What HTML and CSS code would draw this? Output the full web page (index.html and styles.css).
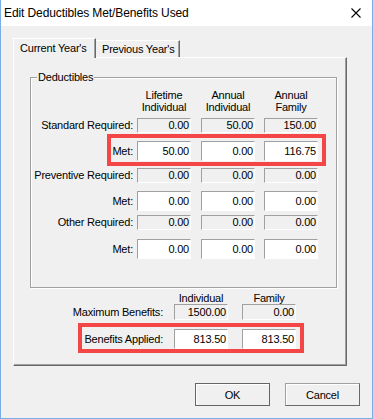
FILE: index.html
```html
<!DOCTYPE html>
<html>
<head>
<meta charset="utf-8">
<link rel="stylesheet" href="styles.css">
</head>
<body>
<div class="window">
  <div class="titlebar">
    <span class="title">Edit Deductibles Met/Benefits Used</span>
    <svg class="close" width="10" height="10" viewBox="0 0 10 10"><path d="M0.5 0.5 L9.5 9.5 M9.5 0.5 L0.5 9.5" stroke="#000" stroke-width="1.1" fill="none"/></svg>
  </div>
  <div class="client">
    <div class="tabs">
      <div class="tab active">Current Year's</div>
      <div class="tab inactive">Previous Year's</div>
    </div>
    <div class="panel">
      <div class="group">
        <span class="group-label">Deductibles</span>
        <div class="grid">
          <div></div>
          <div class="hd">Lifetime<br>Individual</div>
          <div class="hd">Annual<br>Individual</div>
          <div class="hd">Annual<br>Family</div>

          <div class="lab">Standard Required:</div>
          <div class="ro">0.00</div>
          <div class="ro">50.00</div>
          <div class="ro">150.00</div>

          <div class="lab tall">Met:</div>
          <div class="ed">50.00</div>
          <div class="ed">0.00</div>
          <div class="ed">116.75</div>

          <div class="lab">Preventive Required:</div>
          <div class="ro">0.00</div>
          <div class="ro">0.00</div>
          <div class="ro">0.00</div>

          <div class="lab tall">Met:</div>
          <div class="ed">0.00</div>
          <div class="ed">0.00</div>
          <div class="ed">0.00</div>

          <div class="lab">Other Required:</div>
          <div class="ro">0.00</div>
          <div class="ro">0.00</div>
          <div class="ro">0.00</div>

          <div class="lab tall">Met:</div>
          <div class="ed">0.00</div>
          <div class="ed">0.00</div>
          <div class="ed">0.00</div>
        </div>
      </div>
      <div class="bgrid">
        <div></div>
        <div class="hd">Individual</div>
        <div class="hd">Family</div>

        <div class="blab">Maximum Benefits:</div>
        <div class="ro ro16">1500.00</div>
        <div class="ro ro16">0.00</div>

        <div class="blab tall">Benefits Applied:</div>
        <div class="ed">813.50</div>
        <div class="ed">813.50</div>
      </div>
    </div>
    <div class="buttons">
      <button class="btn default">OK</button>
      <button class="btn">Cancel</button>
    </div>
  </div>
  <div class="hl hl1"></div>
  <div class="hl hl2"></div>
</div>
</body>
</html>
```

FILE: styles.css
```css
body {
  margin: 0;
  background: #ffffff;
}

.window {
  position: relative;
  width: 373px;
  height: 419px;
  box-sizing: border-box;
  border: 1px solid #7aaee6;
  border-top: 0;
  background: #f0f0f0;
  font-family: "Liberation Sans", Arial, sans-serif;
  font-size: 11px;
  letter-spacing: -0.2px;
  color: #000;
}

.titlebar {
  height: 26px;
  background: #ffffff;
  display: flex;
  align-items: center;
  justify-content: space-between;
  padding-left: 3px;
}

.title {
  font-size: 12px;
  letter-spacing: -0.1px;
}

.close {
  margin-right: 11px;
  display: block;
}

.client {
  padding: 12px 12px 0 12px;
}

.tabs {
  display: flex;
  align-items: flex-end;
  height: 19px;
  position: relative;
  z-index: 1;
}

.tab {
  box-sizing: border-box;
  border-top: 1px solid #ffffff;
  border-left: 1px solid #ffffff;
  border-right: 1px solid #696969;
  box-shadow: inset -1px 0 #a0a0a0;
  background: #f0f0f0;
  white-space: nowrap;
}

.tab.active {
  width: 83px;
  height: 20px;
  margin-bottom: -1px;
  line-height: 18px;
  padding-left: 6px;
}

.tab.inactive {
  width: 84px;
  height: 17px;
  line-height: 16px;
  border-left: 0;
  padding-left: 6px;
}

.panel {
  width: 334px;
  height: 309px;
  box-sizing: border-box;
  border-top: 1px solid #ffffff;
  border-left: 1px solid #ffffff;
  border-right: 1px solid #696969;
  border-bottom: 1px solid #696969;
  box-shadow: inset -1px -1px #a0a0a0;
  padding: 19px 0 0 16px;
}

.group {
  position: relative;
  width: 307px;
  height: 211px;
  box-sizing: border-box;
  border: 1px solid #a0a0a0;
  box-shadow: inset 1px 1px #ffffff, 1px 1px #ffffff;
  padding-top: 11px;
}

.group-label {
  position: absolute;
  top: -7px;
  left: 6px;
  padding: 0 1px;
  background: #f0f0f0;
  line-height: 13px;
}

.grid {
  display: grid;
  grid-template-columns: 106px 64px 63px 54px;
  grid-template-rows: 29px 23px 27px 23px 24px 24px 20px;
}

.hd {
  width: 54px;
  text-align: center;
  line-height: 12px;
  white-space: nowrap;
}

.lab {
  text-align: right;
  padding-right: 4px;
  line-height: 15px;
  white-space: nowrap;
}

.lab.tall,
.blab.tall {
  line-height: 20px;
}

.blab {
  text-align: right;
  padding-right: 11px;
  line-height: 16px;
  white-space: nowrap;
}

.ro,
.ed {
  box-sizing: border-box;
  width: 54px;
  text-align: right;
  padding-right: 1px;
  border-top: 1px solid #a0a0a0;
  border-left: 1px solid #a0a0a0;
  border-right: 1px solid #ffffff;
  border-bottom: 1px solid #ffffff;
}

.ro {
  height: 15px;
  line-height: 13px;
}

.ro.ro16 {
  height: 16px;
  line-height: 14px;
}

.ed {
  height: 20px;
  line-height: 18px;
  background: #ffffff;
}

.bgrid {
  margin-top: 4px;
  display: grid;
  grid-template-columns: 144px 68px 54px;
  grid-template-rows: 12px 25px 20px;
}

.buttons {
  display: flex;
  justify-content: flex-end;
  gap: 15px;
  margin-top: 17px;
}

.btn {
  width: 75px;
  height: 23px;
  box-sizing: border-box;
  margin: 0;
  padding: 0;
  font-family: inherit;
  font-size: 11px;
  letter-spacing: -0.2px;
  color: #000;
  background: #f0f0f0;
  border: 1px solid #a0a0a0;
  border-right-color: #696969;
  border-bottom-color: #696969;
  box-shadow: inset 1px 1px #ffffff;
}

.btn.default {
  border-color: #646464;
}

.hl {
  position: absolute;
  box-sizing: border-box;
  border: 4px solid #f44646;
}

.hl1 {
  left: 106px;
  top: 134px;
  width: 219px;
  height: 32px;
}

.hl2 {
  left: 77px;
  top: 323px;
  width: 226px;
  height: 30px;
}
```
